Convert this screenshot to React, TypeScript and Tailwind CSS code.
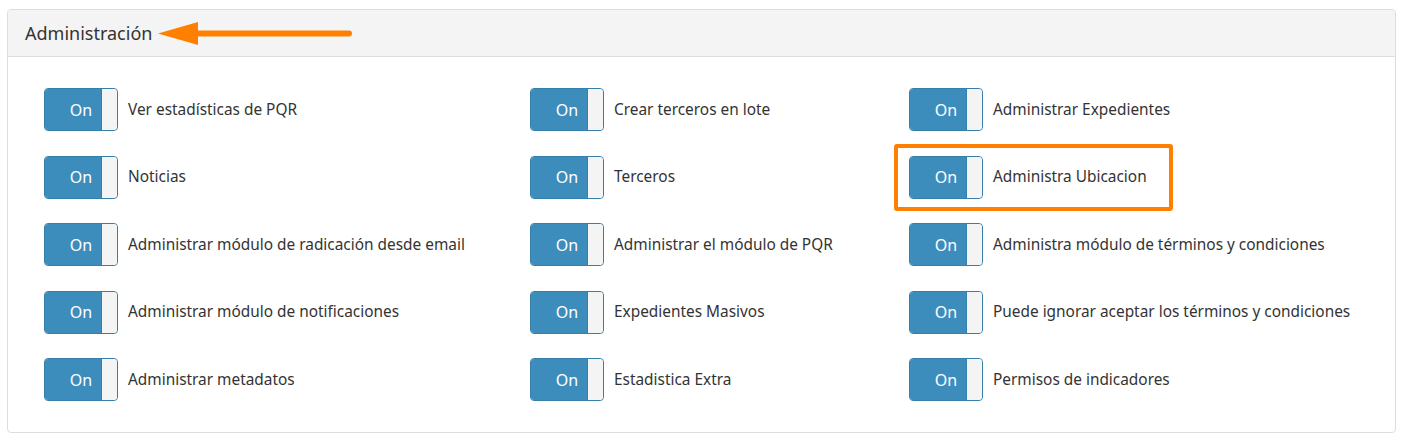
import React from 'react';

const columns: string[][] = [
  [
    'Ver estadísticas de PQR',
    'Noticias',
    'Administrar módulo de radicación desde email',
    'Administrar módulo de notificaciones',
    'Administrar metadatos',
  ],
  [
    'Crear terceros en lote',
    'Terceros',
    'Administrar el módulo de PQR',
    'Expedientes Masivos',
    'Estadistica Extra',
  ],
  [
    'Administrar Expedientes',
    'Administra Ubicacion',
    'Administra módulo de términos y condiciones',
    'Puede ignorar aceptar los términos y condiciones',
    'Permisos de indicadores',
  ],
];

const Toggle: React.FC = () => (
  <div className="flex h-[43px] w-[74px] shrink-0 overflow-hidden rounded-[4px] border border-[#367fa9]">
    <div className="flex w-[56px] items-center justify-center bg-[#3c8dbc] pl-[16px] text-[16px] text-white">
      On
    </div>
    <div className="flex-1 rounded-r-[3px] border-l border-[#367fa9] bg-[#f4f4f4]" />
  </div>
);

const PermissionRow: React.FC<{ label: string; highlight?: boolean }> = ({ label, highlight }) => (
  <div className="relative flex h-[43px] items-center">
    {highlight && (
      <div className="pointer-events-none absolute left-[-15px] top-[-12px] h-[67px] w-[279px] rounded-[3px] border-[4px] border-[#ff8000]" />
    )}
    <Toggle />
    <span className="ml-[10px] whitespace-nowrap text-[15.4px] text-[#333]">{label}</span>
  </div>
);

export default function App() {
  return (
    <div className="min-h-[441px] bg-white px-[7px] pt-[9px]" style={{ fontFamily: '"Noto Sans", "Liberation Sans", sans-serif' }}>
      <div className="h-[424px] w-[1389px] overflow-hidden rounded-[4px] border border-[#ddd]">
        <div className="flex h-[47px] items-center border-b border-[#ddd] bg-[#f4f4f4] pl-[17px]">
          <h3 className="text-[18px] text-[#333]">Administración</h3>
          <svg width="196" height="26" viewBox="0 0 196 26" className="ml-[6px] mt-[1px]">
            <path d="M0 12.5 L40 1 L40 24 Z" fill="#ff8000" />
            <line x1="38" y1="12.5" x2="191" y2="12.5" stroke="#ff8000" strokeWidth="6" strokeLinecap="round" />
          </svg>
        </div>
        <div className="grid grid-cols-[486px_379px_1fr] pl-[36px] pt-[31px]">
          {columns.map((col, ci) => (
            <div key={ci} className="flex flex-col gap-[24.5px]">
              {col.map((label) => (
                <PermissionRow key={label} label={label} highlight={label === 'Administra Ubicacion'} />
              ))}
            </div>
          ))}
        </div>
      </div>
    </div>
  );
}
